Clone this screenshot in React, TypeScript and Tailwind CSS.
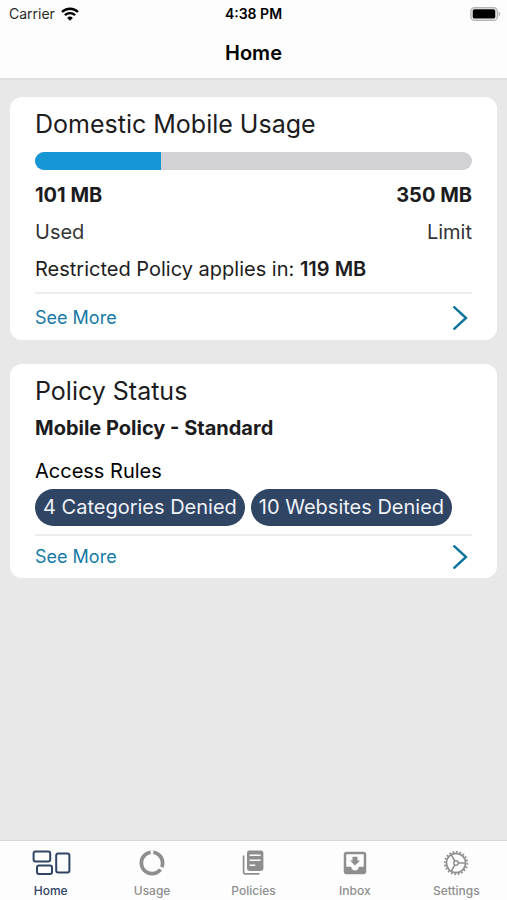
import type { ReactNode } from "react";
import { MdDataUsage, MdMoveToInbox } from "react-icons/md";

type Tab = {
  label: string;
  icon: ReactNode;
};

const usage = { used: 101, limit: 350, restrictedIn: 119 };

const rules = ["4 Categories Denied", "10 Websites Denied"];

const tabs: Tab[] = [
  { label: "Home", icon: <HomeIcon /> },
  { label: "Usage", icon: <MdDataUsage size={30} /> },
  { label: "Policies", icon: <PoliciesIcon /> },
  { label: "Inbox", icon: <MdMoveToInbox size={30} /> },
  { label: "Settings", icon: <SettingsIcon /> },
];

function HomeIcon() {
  return (
    <svg width="40" height="26" viewBox="0 0 40 26" fill="none" stroke="currentColor" strokeWidth="2">
      <rect x="2.6" y="1.6" width="16.6" height="9.8" rx="2" />
      <rect x="6" y="15.6" width="15" height="8.4" rx="2" />
      <rect x="25.2" y="3.6" width="13.2" height="19" rx="2" />
    </svg>
  );
}

function PoliciesIcon() {
  return (
    <svg width="22" height="26" viewBox="0 0 22 26" fill="none">
      <path d="M1.6 5.6v17c0 .8.5 1.3 1.3 1.3h14.6" stroke="currentColor" strokeWidth="1.7" />
      <rect x="5" y="0.6" width="16.4" height="20.4" rx="2.4" fill="currentColor" />
      <path d="M7.6 5.2h11M7.6 10.2h11M7.6 15.2h5.6" stroke="#fdfdfd" strokeWidth="1.4" />
    </svg>
  );
}

function SettingsIcon() {
  return (
    <svg width="26" height="26" viewBox="0 0 26 26" fill="none" stroke="currentColor">
      <circle cx="13" cy="13" r="9.6" strokeWidth="1.7" />
      {/* 20 teeth around the rim */}
      <circle cx="13" cy="13" r="11.2" strokeWidth="1.8" pathLength="40" strokeDasharray="1 1" />
      <circle cx="13" cy="13" r="2.3" strokeWidth="1.4" />
      <path d="M15.3 13h7.4M11.85 11 8.2 4.7M11.85 15 8.2 21.3" strokeWidth="1.5" />
    </svg>
  );
}

function WifiIcon() {
  return (
    <svg width="18" height="14" viewBox="0 0 18 14" fill="none" stroke="currentColor" strokeWidth="2.4">
      <path d="M1 5a11.3 11.3 0 0 1 16 0" />
      <path d="M3.9 8.2a7.2 7.2 0 0 1 10.2 0" />
      <path d="M9 13.8 6.2 10.9a4 4 0 0 1 5.6 0z" fill="currentColor" stroke="none" />
    </svg>
  );
}

function BatteryIcon() {
  return (
    <svg width="31" height="14" viewBox="0 0 31 14">
      <rect x="0.9" y="0.7" width="26.4" height="12.6" rx="3.6" fill="#fdfdfd" stroke="#b5b5b5" strokeWidth="1.4" />
      <rect x="2.7" y="2.2" width="22.6" height="9.4" rx="1.6" fill="#000" />
      <path d="M28.6 4.8c1 .3 1.7 1.1 1.7 2.2s-.7 1.9-1.7 2.2z" fill="#b5b5b5" />
    </svg>
  );
}

function SeeMore({ className }: { className: string }) {
  return (
    <a
      href="#"
      className={`flex items-center justify-between border-t-2 border-[#ebedef] text-lg text-[#167aa5] ${className}`}
    >
      See More
      <svg width="20" height="26" viewBox="0 0 20 26" fill="none" stroke="#0b739b" strokeWidth="2.4">
        <path d="M2.2 2.2 14 13 2.2 23.8" strokeLinecap="round" />
      </svg>
    </a>
  );
}

function Card({ title, children }: { title: string; children: ReactNode }) {
  return (
    <section className="rounded-xl bg-white px-[25px] pt-2">
      <h2 className="text-[25px] leading-[38px]">{title}</h2>
      {children}
    </section>
  );
}

export default function App() {
  return (
    <div className="flex min-h-screen flex-col bg-[#e8e8e8] font-['Inter','Liberation_Sans',sans-serif] text-[#1c1c1e]">
      <header className="border-b-2 border-[#dedede] bg-[#fdfdfd] text-black">
        <div className="grid h-7 grid-cols-3 items-center px-1.5 text-sm">
          <div className="flex items-center gap-1.5 pl-[3px] text-[#2a2a2a]">
            Carrier
            <span className="text-black">
              <WifiIcon />
            </span>
          </div>
          <div className="text-center font-semibold">4:38 PM</div>
          <div className="flex justify-end">
            <BatteryIcon />
          </div>
        </div>
        <h1 className="text-center text-xl leading-[50px] font-semibold">Home</h1>
      </header>

      <main className="flex flex-1 flex-col gap-6 px-2.5 pt-[17px]">
        <Card title="Domestic Mobile Usage">
          <div className="mt-[9px] h-[18px] overflow-hidden rounded-full bg-[#d1d1d6]">
            <div
              className="h-full bg-[#1796d6]"
              style={{ width: `${(usage.used / usage.limit) * 100}%` }}
            />
          </div>
          <div className="mt-[7px] flex justify-between text-xl leading-[37px] font-bold">
            <span>{usage.used} MB</span>
            <span>{usage.limit} MB</span>
          </div>
          <div className="flex justify-between text-xl leading-[37px] text-[#333]">
            <span>Used</span>
            <span>Limit</span>
          </div>
          <p className="text-xl leading-[37px]">
            Restricted Policy applies in: <b className="font-semibold">{usage.restrictedIn} MB</b>
          </p>
          <SeeMore className="mt-1 h-12 pt-0.5" />
        </Card>

        <Card title="Policy Status">
          <p className="text-xl leading-[37px] font-bold">Mobile Policy - Standard</p>
          <h3 className="mt-1.5 text-xl leading-9 text-black">Access Rules</h3>
          <ul className="flex flex-wrap gap-1.5">
            {rules.map((rule) => (
              <li key={rule} className="rounded-full bg-[#304463] px-2 text-xl leading-[37px] text-[#eef2f8]">
                {rule}
              </li>
            ))}
          </ul>
          <SeeMore className="mt-2 h-11" />
        </Card>
      </main>

      <nav className="grid grid-cols-5 border-t border-[#d8d8d8] bg-[#fdfdfd] pt-1.5 pb-px">
        {tabs.map((tab) => (
          <a
            key={tab.label}
            href="#"
            aria-current={tab.label === "Home" ? "page" : undefined}
            className="flex flex-col items-center text-[#8e8e8e] aria-[current=page]:text-[#304463]"
          >
            <span className="flex h-8 items-center">{tab.icon}</span>
            <span className="mt-1 text-xs leading-4 font-medium">{tab.label}</span>
          </a>
        ))}
      </nav>
    </div>
  );
}
